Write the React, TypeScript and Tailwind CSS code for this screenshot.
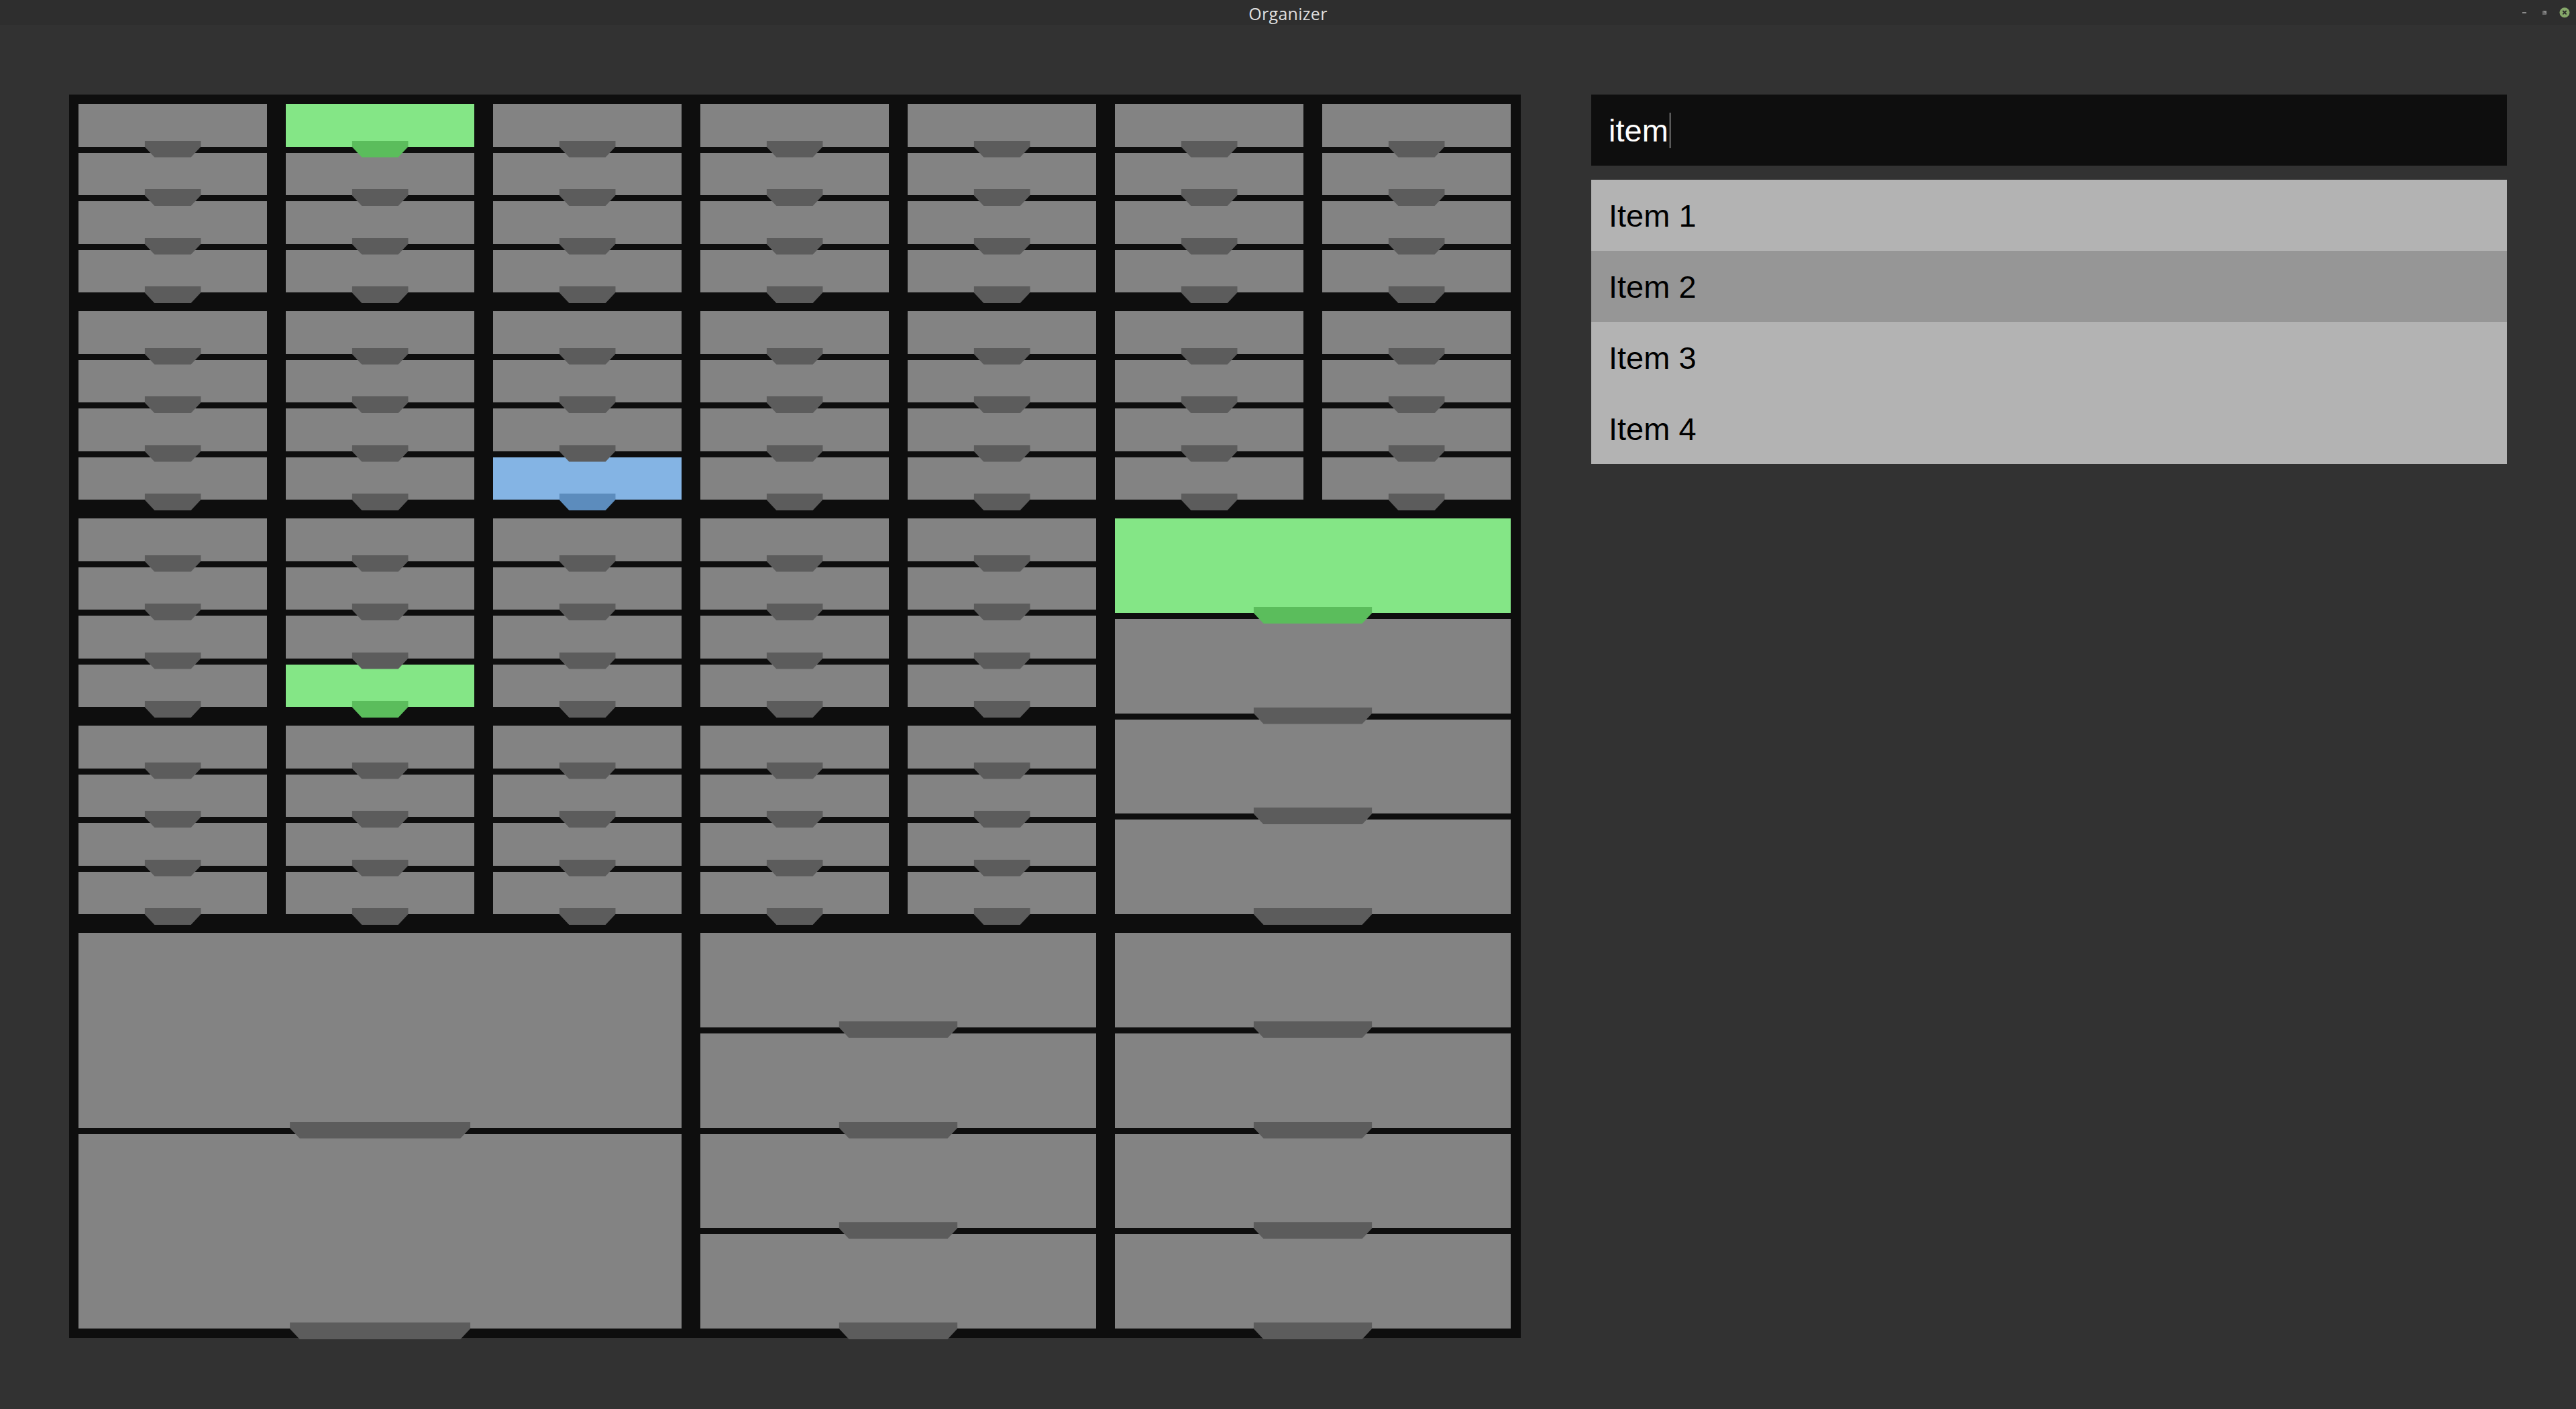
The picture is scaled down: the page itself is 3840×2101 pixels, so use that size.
import React from "react";

type Tone = "gray" | "green" | "blue";

const bodyTone: Record<Tone, string> = {
  gray: "bg-[#838383]",
  green: "bg-[#84e686]",
  blue: "bg-[#84b4e4]",
};
const handleTone: Record<Tone, string> = {
  gray: "bg-[#5c5c5c]",
  green: "bg-[#5bbd5c]",
  blue: "bg-[#5c8cbd]",
};

function Drawer({ tone = "gray" }: { tone?: Tone }) {
  return (
    <div className={`relative flex-1 ${bodyTone[tone]}`}>
      <div
        className={`absolute left-1/2 -translate-x-1/2 bottom-[-16px] z-10 h-[25px] w-[30%] ${handleTone[tone]} [clip-path:polygon(0_0,100%_0,100%_9px,calc(100%_-_15px)_100%,15px_100%,0_9px)]`}
      />
    </div>
  );
}

function Stack({
  count,
  tones = {},
  className = "",
}: {
  count: number;
  tones?: Record<number, Tone>;
  className?: string;
}) {
  return (
    <div className={`flex flex-col gap-[9px] ${className}`}>
      {Array.from({ length: count }).map((_, i) => (
        <Drawer key={i} tone={tones[i] ?? "gray"} />
      ))}
    </div>
  );
}

function Cabinet() {
  const cells: React.ReactNode[] = [];
  for (let r = 0; r < 2; r++) {
    for (let c = 0; c < 7; c++) {
      const tones: Record<number, Tone> = {};
      if (r === 0 && c === 1) tones[0] = "green";
      if (r === 1 && c === 2) tones[3] = "blue";
      cells.push(<Stack key={`a${r}-${c}`} count={4} tones={tones} />);
    }
  }
  return (
    <div className="grid w-[2164px] shrink-0 grid-cols-[repeat(7,281px)] grid-rows-[repeat(6,281px)] gap-[28px] bg-[#0e0e0e] p-[14px]">
      {cells}
      <Stack count={4} className="col-start-1 row-start-3" />
      <Stack count={4} tones={{ 3: "green" }} className="col-start-2 row-start-3" />
      <Stack count={4} className="col-start-3 row-start-3" />
      <Stack count={4} className="col-start-4 row-start-3" />
      <Stack count={4} className="col-start-5 row-start-3" />
      <Stack count={4} className="col-start-1 row-start-4" />
      <Stack count={4} className="col-start-2 row-start-4" />
      <Stack count={4} className="col-start-3 row-start-4" />
      <Stack count={4} className="col-start-4 row-start-4" />
      <Stack count={4} className="col-start-5 row-start-4" />
      <Stack count={4} tones={{ 0: "green" }} className="col-start-6 col-span-2 row-start-3 row-span-2" />
      <Stack count={2} className="col-start-1 col-span-3 row-start-5 row-span-2" />
      <Stack count={4} className="col-start-4 col-span-2 row-start-5 row-span-2" />
      <Stack count={4} className="col-start-6 col-span-2 row-start-5 row-span-2" />
    </div>
  );
}

function TitleBar() {
  return (
    <div className="relative flex h-[37px] items-center justify-center bg-[#2e2e2e]">
      <span className="pt-[3px] font-['Open_Sans','Noto_Sans',sans-serif] text-[25px] font-medium leading-none tracking-[0.3px] text-[#dedede]">
        Organizer
      </span>
      <div className="absolute right-0 top-0 flex h-[37px] items-center">
        <svg width="100" height="37" viewBox="0 0 100 37">
          <rect x="20" y="18" width="6" height="2" fill="#8a8a8a" />
          <polygon points="50,16 56,16 56,22" fill="#8a8a8a" />
          <polygon points="50,16 50,22 56,22" fill="#6a6a6a" />
          <circle cx="83" cy="18.7" r="7.5" fill="#86a86a" />
          <path d="M80.3 16 L85.7 21.4 M85.7 16 L80.3 21.4" stroke="#2a2a2a" strokeWidth="1.8" />
        </svg>
      </div>
    </div>
  );
}

function Panel() {
  const items = ["Item 1", "Item 2", "Item 3", "Item 4"];
  return (
    <div className="flex min-w-0 flex-1 flex-col gap-[21px] font-['Liberation_Sans',Arial,sans-serif]">
      <div className="flex h-[106px] items-center bg-[#0e0e0e] px-[26px]">
        <span className="text-[47px] leading-none text-white">item</span>
        <span className="ml-[2px] h-[53px] w-px bg-white" />
      </div>
      <div className="flex flex-col">
        {items.map((it, i) => (
          <div
            key={it}
            className={`flex h-[106px] items-center px-[26px] text-[47px] leading-none text-black ${
              i === 1 ? "bg-[#969696]" : "bg-[#b3b3b3]"
            }`}
          >
            {it}
          </div>
        ))}
      </div>
    </div>
  );
}

export default function App() {
  return (
    <div className="flex h-[2101px] w-[3840px] flex-col overflow-hidden bg-[#323232]">
      <TitleBar />
      <div className="flex items-start gap-[105px] px-[103px] pt-[104px]">
        <Cabinet />
        <Panel />
      </div>
    </div>
  );
}
